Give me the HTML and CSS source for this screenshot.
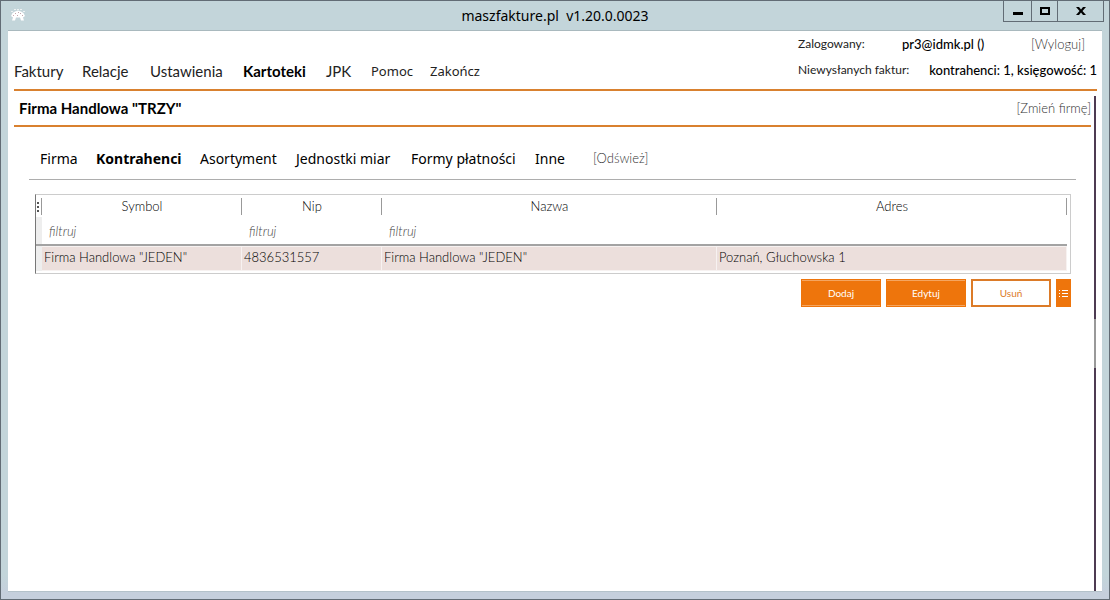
FILE: index.html
```html
<!DOCTYPE html>
<html lang="pl">
<head>
<meta charset="utf-8">
<meta name="viewport" content="width=device-width, initial-scale=1">
<title>maszfakture.pl</title>
<link rel="stylesheet" href="styles.css">
</head>
<body>
<div class="window">
  <header class="titlebar">
    <svg class="app-icon" width="16" height="14" viewBox="0 0 16 14" aria-hidden="true">
      <path class="shell" d="M2 12.500 3 9.500 1 8 2.500 5 5 3.500 8 2.500l3 1L13.500 5 15 8l-2 1.500 1 3h-3L10 9.500H6L5 12.500z"/>
      <path class="dots" d="M1 3h2v1H1zM4 1h2v1H4zM7 1h2v1H7zM10 1h2v1h-2zM13 3h2v1h-2z"/>
      <path class="marks" d="M5 5h1v1H5zM8 4h1v1H8zM10 5h1v1h-1zM3 7h1v1H3zM12 7h1v1h-1zM7 7h1v1H7z"/>
    </svg>
    <h1 class="title">maszfakture.pl&nbsp; v1.20.0.0023</h1>
    <div class="window-controls">
      <button class="control" type="button" aria-label="Minimalizuj"><svg width="12" height="10" viewBox="0 0 12 10"><path d="M1 6h10v3H1z"/></svg></button>
      <button class="control" type="button" aria-label="Maksymalizuj"><svg width="12" height="10" viewBox="0 0 12 10"><path fill-rule="evenodd" d="M1 1h10v8H1zM3 3v4h6V3z"/></svg></button>
      <button class="control control-close" type="button" aria-label="Zamknij"><svg width="12" height="10" viewBox="0 0 12 10"><path d="M1 1h3l2 2.500L8 1h3L7.500 5 11 9H8L6 6.500 4 9H1l3.500-4z"/></svg></button>
    </div>
  </header>
  <div class="client">
    <div class="topbar">
      <nav class="main-nav">
        <a href="#">Faktury</a>
        <a href="#">Relacje</a>
        <a href="#">Ustawienia</a>
        <a class="current" href="#">Kartoteki</a>
        <a href="#">JPK</a>
        <a class="system" href="#">Pomoc</a>
        <a class="system" href="#">Zakończ</a>
      </nav>
      <div class="account">
        <div class="account-row">
          <span class="account-label">Zalogowany:</span>
          <span class="login">pr3@idmk.pl ()</span>
          <a class="action logout" href="#">[Wyloguj]</a>
        </div>
        <div class="account-row">
          <span class="account-label">Niewysłanych faktur:</span>
          <strong class="pending">kontrahenci: 1, księgowość: 1</strong>
        </div>
      </div>
    </div>
    <div class="workspace">
      <main class="page">
        <div class="company">
          <h2 class="company-name">Firma Handlowa "TRZY"</h2>
          <a class="action" href="#">[Zmień firmę]</a>
        </div>
        <section class="card-file">
          <nav class="sub-nav">
            <a href="#">Firma</a>
            <a class="current" href="#">Kontrahenci</a>
            <a href="#">Asortyment</a>
            <a href="#">Jednostki miar</a>
            <a href="#">Formy płatności</a>
            <a href="#">Inne</a>
            <a class="action" href="#">[Odśwież]</a>
          </nav>
          <div class="list">
            <div class="grid-frame">
              <table class="grid">
                <colgroup><col class="c-handle"><col class="c-symbol"><col class="c-nip"><col class="c-name"><col></colgroup>
                <thead>
                  <tr class="heads">
                    <td class="handle"><svg width="4" height="12" viewBox="0 0 4 12" aria-hidden="true"><path d="M1 1h2v2H1zM1 5h2v2H1zM1 9h2v2H1z"/></svg></td>
                    <th scope="col">Symbol</th>
                    <th scope="col">Nip</th>
                    <th scope="col">Nazwa</th>
                    <th scope="col">Adres</th>
                  </tr>
                  <tr class="filters">
                    <td class="gutter"></td>
                    <td><input class="filter" type="text" placeholder="filtruj" aria-label="Symbol"></td>
                    <td><input class="filter" type="text" placeholder="filtruj" aria-label="Nip"></td>
                    <td><input class="filter" type="text" placeholder="filtruj" aria-label="Nazwa"></td>
                    <td></td>
                  </tr>
                </thead>
                <tbody>
                  <tr>
                    <td class="gutter"></td>
                    <td>Firma Handlowa "JEDEN"</td>
                    <td>4836531557</td>
                    <td>Firma Handlowa "JEDEN"</td>
                    <td>Poznań, Głuchowska 1</td>
                  </tr>
                </tbody>
              </table>
            </div>
            <div class="buttons">
              <button class="button" type="button">Dodaj</button>
              <button class="button" type="button">Edytuj</button>
              <button class="button button-outline" type="button">Usuń</button>
              <button class="button button-menu" type="button" aria-label="Menu"><svg width="9" height="9" viewBox="0 0 9 9"><path d="M0 1h1v1H0zM3 1h6v1H3zM0 4h1v1H0zM3 4h6v1H3zM0 7h1v1H0zM3 7h6v1H3z"/></svg></button>
            </div>
          </div>
        </section>
      </main>
      <div class="scroll-track"><div class="scroll-thumb"></div></div>
    </div>
  </div>
</div>
</body>
</html>
```
FILE: styles.css
```css
* { box-sizing: border-box; }

body {
  margin: 0;
  font-family: Lato, "Liberation Sans", sans-serif;
  font-size: 13px;
  font-weight: 300;
  line-height: 16px;
  color: #000;
}

a { color: inherit; text-decoration: none; white-space: nowrap; }

button { font: inherit; padding: 0; cursor: pointer; }

.window {
  display: flex;
  flex-direction: column;
  min-height: 100vh;
  padding: 0 7px 7px;
  border: 1px solid #626c75;
  background: linear-gradient(#c3d5da 96%, #c5cfdc 99%);
}

.titlebar {
  display: grid;
  grid-template-columns: 1fr auto 1fr;
  height: 29px;
}

.app-icon { margin: 7px 0 0 2px; }
.shell { fill: #fff; }
.dots { fill: #edf1f2; }
.marks { fill: #c4a9ae; }

.title {
  margin: 0;
  font: 14px/30px "Noto Sans", sans-serif;
  white-space: nowrap;
}

.window-controls {
  display: grid;
  grid-template-columns: 27px 26px 46px;
  justify-self: end;
  height: 21px;
  margin-right: -2px;
  border: 1px solid #626c75;
  border-top: 0;
}

.control {
  display: grid;
  place-items: center;
  border: 0;
  background: none;
}

.control + .control { border-left: 1px solid #626c75; }

.client {
  display: flex;
  flex: 1;
  flex-direction: column;
  padding: 0 5px 0 6px;
  border-bottom: 1px solid #b4c2ca;
  border-top: 1px solid #a9b9be;
  background: #fff;
}

.topbar {
  display: flex;
  align-items: flex-end;
  justify-content: space-between;
  height: 60px;
  border-bottom: 2px solid #d9812f;
}

.main-nav {
  display: grid;
  grid-template-columns: 68px 68px 93px 83px 45px 59px auto;
  padding-bottom: 8px;
  font-size: 15px;
  font-weight: 400;
  line-height: 20px;
}

.main-nav a { color: #222; }
.main-nav .current, .sub-nav .current { font-weight: 700; color: #000; }

.main-nav .system { font-family: "Noto Sans", sans-serif; font-size: 13px; }

.account {
  display: grid;
  gap: 10px;
  width: 299px;
  padding-bottom: 11px;
}

.account-row { display: flex; justify-content: space-between; white-space: nowrap; }

.account-label { width: 104px; font-size: 12px; font-weight: 400; color: #222; }
.login { margin-right: auto; }
.login, .pending { font-size: 13px; font-weight: 500; }
.logout { margin-right: 12px; }
.action { color: #333; font-size: 13px; }

.workspace {
  display: flex;
  flex: 1;
  gap: 3px;
  padding-right: 1px;
}

.page { flex: 1; min-width: 0; }

.company {
  display: flex;
  align-items: center;
  justify-content: space-between;
  height: 36px;
  padding: 0 0 1px 5px;
  border-bottom: 2px solid #d9812f;
}

.company-name { margin: 0; font-size: 15px; line-height: 20px; }

.card-file { padding: 20px 15px 0; }

.sub-nav {
  display: grid;
  grid-template-columns: 56px 104px 96px 115px 124px 58px auto;
  align-items: center;
  height: 33px;
  padding: 0 0 8px 11px;
  border-bottom: 1px solid #adadad;
  font: 14px/20px "Noto Sans", sans-serif;
}

.sub-nav .action { padding-bottom: 2px; font-family: Lato, sans-serif; font-weight: 300; }

.list { padding: 14px 5px 0 6px; }

.grid-frame {
  padding: 1px 3px 2px 0;
  border: 1px solid #ccc;
  border-left-color: #777;
}

.grid {
  width: 100%;
  table-layout: fixed;
  border-collapse: separate;
  border-spacing: 0;
  font-size: 13px;
}

.c-handle { width: 6px; }
.c-symbol { width: 200px; }
.c-nip { width: 140px; }
.c-name { width: 335px; }

.grid td, .grid th { padding: 0; }

.heads { height: 21px; }
.grid .heads th { padding-bottom: 1px; font-weight: 300; }

.heads th, .handle {
  background: linear-gradient(#999, #999) right 2px / 1px 17px no-repeat;
}

.handle svg { display: block; fill: #555; }

.filters td { height: 29px; border-bottom: 2px solid #a3a3a3; }

.gutter { background: #eee; }

.filter {
  display: block;
  width: 100%;
  height: 26px;
  padding: 0 7px;
  border: 0;
  background: none;
  font: inherit;
}

.filter::placeholder { color: #444; font-style: italic; opacity: 1; }

.grid tbody td { height: 25px; padding: 0 0 4px 2px; white-space: nowrap; }

.grid tbody td:not(.gutter) {
  border: 1px solid #f7f2f1;
  border-left: 0;
  background: #ecdfdc;
}

.buttons {
  display: flex;
  justify-content: flex-end;
  gap: 5px;
  padding-top: 5px;
}

.button {
  width: 80px;
  height: 28px;
  border: 1px solid #ee750c;
  background: #ee750c;
  box-shadow: inset 0 1px #f5a55f, inset 0 -1px #f5a55f;
  color: #fff;
  font-size: 10px;
  font-weight: 400;
}

.button-outline {
  border: 2px solid #dc7b28;
  background: #fff;
  box-shadow: none;
  color: #dc7b28;
}

.button-menu { display: grid; place-items: center; width: 15px; box-shadow: none; }
.button-menu svg { fill: #fff; }

.scroll-track {
  display: grid;
  grid-template-rows: 45fr 10fr 45fr;
  width: 2px;
  margin-top: 5px;
  background: #4d3b52;
}

.scroll-thumb { grid-row: 2; background: #999; }
```
